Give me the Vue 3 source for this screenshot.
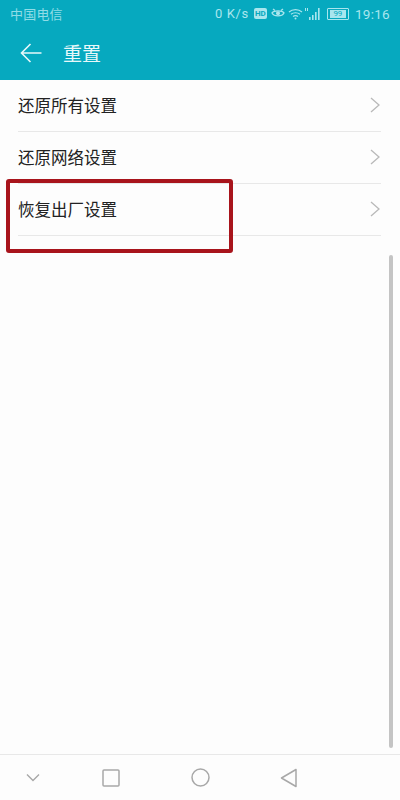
<script setup>
const rows = ['还原所有设置', '还原网络设置', '恢复出厂设置']
</script>

<template>
  <div class="screen">
    <header class="header">
      <div class="status">
        <span class="carrier">中国电信</span>
        <div class="status-right">
          <span class="speed">0 K/s</span>
          <span class="hd">HD</span>
          <svg class="eye" width="14" height="12" viewBox="0 0 14 12" fill="none" stroke="#a9e6ee" stroke-width="1.3">
            <path d="M1 5C3 2.2 11 2.2 13 5C11 8.8 3 8.8 1 5Z" />
            <circle cx="7" cy="5.2" r="2" fill="#a9e6ee" stroke="none" />
            <path d="M2 1l2 1.5M12 1l-2 1.5" />
          </svg>
          <svg class="wifi" width="15" height="12" viewBox="0 0 15 12" fill="none" stroke="#a9e6ee" stroke-width="1.2">
            <path d="M1 4C4.5 .8 10.5 .8 14 4M3 6.3C5.4 4.2 9.6 4.2 12 6.3M5 8.5C6.4 7.4 8.6 7.4 10 8.5" />
            <circle cx="7.5" cy="10.5" r="1" fill="#a9e6ee" stroke="none" />
          </svg>
          <svg class="signal" width="18" height="14" viewBox="0 0 18 14" fill="#a9e6ee">
            <rect x="5" y="10" width="1.6" height="3" />
            <rect x="8" y="8" width="1.6" height="5" />
            <rect x="11" y="5" width="1.6" height="8" />
            <rect x="14" y="1" width="1.6" height="12" />
            <rect x="1" y="1" width="1" height="3" />
            <rect x="3" y="1" width="1" height="3" />
          </svg>
          <span class="battery"><span class="level">99</span></span>
          <span class="time">19:16</span>
        </div>
      </div>
      <div class="titlebar">
        <svg class="back" width="22" height="20" viewBox="0 0 22 20" fill="none" stroke="#e8f8fa" stroke-width="1.6">
          <path d="M10.5 1L1.5 10L10.5 19M1.5 10H21.5" />
        </svg>
        <h1 class="title">重置</h1>
      </div>
    </header>

    <main class="list">
      <div v-for="row in rows" :key="row" class="row">
        <span class="label">{{ row }}</span>
        <svg class="chevron" width="10" height="16" viewBox="0 0 10 16" fill="none" stroke="#b9b9b9" stroke-width="1.3">
          <path d="M1 1l8 7l-8 7" />
        </svg>
      </div>
    </main>

    <nav class="nav">
      <svg width="16" height="10" viewBox="0 0 16 10" fill="none" stroke="#a8a8a8" stroke-width="1.4">
        <path d="M2 1.5L8 7.5L14 1.5" />
      </svg>
      <svg width="18" height="18" viewBox="0 0 18 18" fill="none" stroke="#a8a8a8" stroke-width="1.5">
        <rect x="1" y="1" width="16" height="16" rx="1" />
      </svg>
      <svg width="19" height="19" viewBox="0 0 19 19" fill="none" stroke="#a8a8a8" stroke-width="1.5">
        <circle cx="9.5" cy="9.5" r="8.5" />
      </svg>
      <svg width="18" height="20" viewBox="0 0 18 20" fill="none" stroke="#a8a8a8" stroke-width="1.5" stroke-linejoin="round">
        <path d="M1.5 10L16 1.5V18.5Z" />
      </svg>
    </nav>

    <div class="scrollbar"></div>
    <div class="highlight"></div>
  </div>
</template>

<style scoped>
.screen {
  position: relative;
  width: 400px;
  height: 800px;
  display: flex;
  flex-direction: column;
  overflow: hidden;
  background: #fdfdfd;
  font-family: "Roboto", "Noto Sans CJK SC", sans-serif;
}
.header {
  height: 80px;
  flex: none;
  background: #06a9bf;
  display: flex;
  flex-direction: column;
}
.status {
  height: 28px;
  flex: none;
  display: flex;
  align-items: center;
  justify-content: space-between;
  padding: 0 10px 1px 10px;
  box-sizing: border-box;
  color: #a9e6ee;
  font-size: 13px;
}
.carrier {
  letter-spacing: 0.2px;
  opacity: 0.85;
}
.status-right {
  display: flex;
  align-items: center;
}
.speed {
  font-size: 13px;
  letter-spacing: 0.6px;
  margin-right: 5px;
}
.hd {
  width: 13px;
  height: 11px;
  border-radius: 2px;
  background: #a9e6ee;
  color: #06a9bf;
  font-size: 8px;
  font-weight: 700;
  line-height: 11px;
  text-align: center;
  margin-right: 4px;
}
.eye {
  margin-right: 3px;
}
.wifi {
  margin-right: 1px;
}
.signal {
  margin-right: 5px;
}
.battery {
  width: 20px;
  height: 10px;
  border: 1px solid #a9e6ee;
  border-radius: 1px;
  display: flex;
  align-items: center;
  justify-content: center;
  margin-right: 6px;
  box-sizing: content-box;
}
.level {
  width: 16px;
  height: 8px;
  background: #a9e6ee;
  color: #06a9bf;
  font-size: 8px;
  line-height: 8px;
  text-align: center;
}
.time {
  font-size: 13.5px;
  letter-spacing: 0.3px;
}
.titlebar {
  flex: 1;
  display: flex;
  align-items: center;
  padding: 0 0 3px 20px;
}
.back {
  flex: none;
}
.title {
  margin: 0 0 0 21px;
  font-size: 19px;
  font-weight: 400;
  color: #e8f8fa;
}
.list {
  flex: 1;
}
.row {
  height: 52px;
  margin: 0 19px 0 18px;
  padding: 0 1px 2px 0;
  box-sizing: border-box;
  border-bottom: 1px solid #e8e8e8;
  display: flex;
  align-items: center;
  justify-content: space-between;
}
.label {
  font-size: 16.5px;
  color: #222;
}
.nav {
  height: 45px;
  flex: none;
  border-top: 1px solid #e8e8e8;
  background: #fdfdfd;
  display: grid;
  grid-template-columns: 66px 90px 88px 90px;
  justify-items: center;
  align-items: center;
}
.scrollbar {
  position: absolute;
  left: 389px;
  top: 255px;
  width: 4px;
  height: 493px;
  border-radius: 2px;
  background: #c4c4c4;
}
.highlight {
  position: absolute;
  left: 6px;
  top: 179px;
  width: 227px;
  height: 74px;
  box-sizing: border-box;
  border: 4px solid #a8141c;
  border-radius: 3px;
}
</style>
